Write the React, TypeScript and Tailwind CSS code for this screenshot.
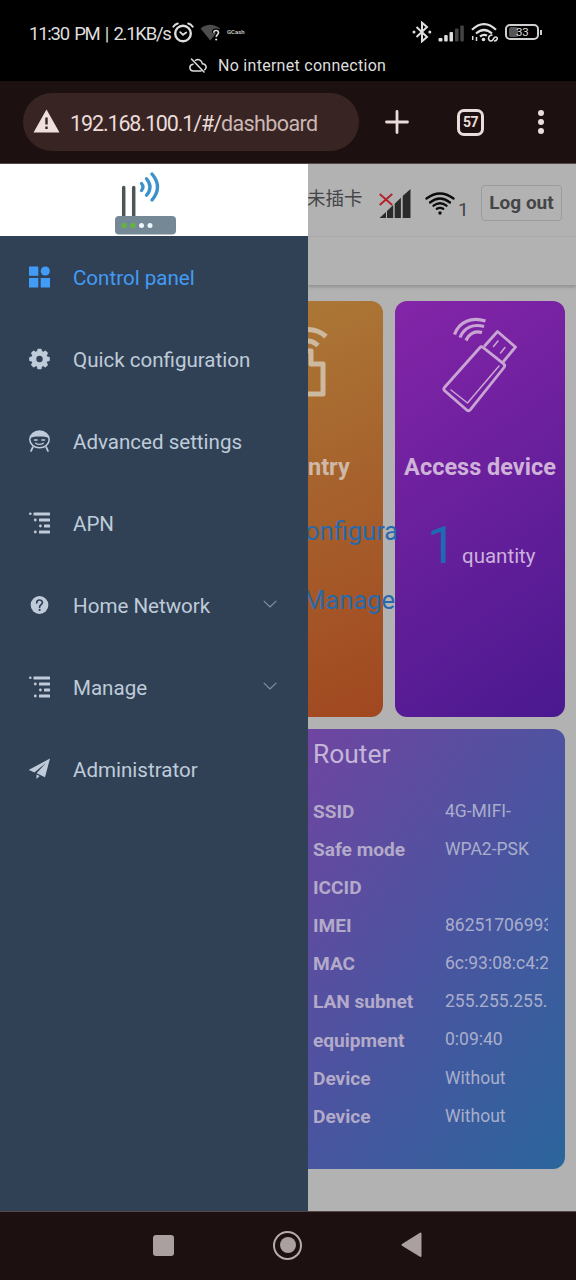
import type { ReactNode } from "react";

interface MenuItem {
  label: string;
  icon: ReactNode;
  active?: boolean;
  expandable?: boolean;
}

interface InfoRow {
  label: string;
  value: string;
}

const PanelIcon = () => (
  <svg width="22" height="22" viewBox="0 0 22 22" fill="currentColor">
    <rect x="0" y="0.5" width="9.3" height="9.3" />
    <circle cx="16.3" cy="5" r="4.6" />
    <rect x="0" y="12" width="9.3" height="9.5" />
    <rect x="11.7" y="12" width="9.3" height="9.5" />
  </svg>
);

const GearIcon = () => (
  <svg width="22" height="22" viewBox="0.5 0 22 22">
    <g fill="currentColor">
      <circle cx="11" cy="11" r="8.3" />
      {[0, 45, 90, 135].map((deg) => (
        <rect
          key={deg}
          x="8.7"
          y="0.7"
          width="4.6"
          height="20.6"
          rx="1.2"
          transform={`rotate(${deg} 11 11)`}
        />
      ))}
    </g>
    <circle cx="11" cy="11" r="3.2" fill="#304156" />
  </svg>
);

const FaceIcon = () => (
  <svg
    width="22"
    height="22"
    viewBox="0.5 0 22 22"
    fill="none"
    stroke="currentColor"
    strokeLinecap="round"
  >
    <ellipse cx="11" cy="9.4" rx="9.7" ry="8.4" strokeWidth="1.5" />
    <path
      d="M2 8C3 3 7 .9 11 .9s8 2.1 9 7.1c-2.500-1-4.500-1.400-9-1.400S4.500 7 2 8z"
      fill="currentColor"
      stroke="none"
    />
    <path d="M6 10h2.600M13.400 10H16" strokeWidth="1.4" />
    <path d="M7.200 13.200c2 1.500 5.600 1.500 7.600 0" strokeWidth="1.3" />
    <path d="M4.300 17.200L2.600 20.900M17.700 17.200l1.700 3.700" strokeWidth="1.8" />
  </svg>
);

const TreeIcon = () => (
  <svg width="22" height="22" viewBox="0.5 0 22 22" fill="currentColor">
    <circle cx="1.8" cy="1.8" r="1.3" />
    <rect x="5" y="0.4" width="16.5" height="3" rx="0.5" />
    <circle cx="6.8" cy="8" r="1.4" />
    <rect x="10.5" y="6.5" width="11" height="3" rx="0.5" />
    <circle cx="11.9" cy="14" r="1.4" />
    <rect x="15.5" y="12.5" width="6" height="3" rx="0.5" />
    <circle cx="6.8" cy="20" r="1.4" />
    <rect x="10.5" y="18.5" width="11" height="3" rx="0.5" />
  </svg>
);

const QuestionIcon = () => (
  <svg width="22" height="22" viewBox="0.5 0 22 22" fill="none">
    <circle cx="11" cy="11" r="8.9" fill="currentColor" />
    <path
      d="M8.200 8.800c0-3.700 5.700-3.700 5.700-.2 0 2.200-2.800 2-2.800 4.600"
      stroke="#304156"
      strokeWidth="1.7"
      strokeLinecap="round"
    />
    <circle cx="11.1" cy="15.9" r="1.1" fill="#304156" />
  </svg>
);

const PlaneIcon = () => (
  <svg width="22" height="22" viewBox="0.5 0 22 22" fill="currentColor">
    <path d="M21.500.5L.3 11.900l5.600 2.700L17.600 4.700 8.100 15.300l8.400 4L21.500.5z" />
    <path d="M8 16.600v4.300l3.100-2.900L8 16.600z" />
  </svg>
);

const ChevronIcon = () => (
  <svg className="-mt-0.5" width="14" height="8" viewBox="0 0 14 8" fill="none">
    <path d="M.7.800L7 7 13.300.8" stroke="#8393a7" strokeWidth="1.1" />
  </svg>
);

const RouterLogo = () => (
  <svg width="62" height="64" viewBox="0.5 0.5 62 64">
    <g stroke="#4e5557" strokeWidth="3.5" strokeLinecap="round">
      <path d="M9.200 16v30M19.200 16v30" />
    </g>
    <rect x="0.5" y="44.5" width="61" height="18.5" rx="4" fill="#758896" />
    <circle cx="9.7" cy="54" r="2.8" fill="#62b346" />
    <circle cx="18.5" cy="54" r="2.8" fill="#62b346" />
    <circle cx="27" cy="54" r="2.5" fill="#edf6ff" />
    <circle cx="35.5" cy="54" r="2.5" fill="#edf6ff" />
    <g fill="none" stroke="#3c91ca" strokeWidth="3.3" strokeLinecap="round">
      <path d="M27 12q3 3.500 0 7" />
      <path d="M32 7.200q7 8.300 0 16.600" />
      <path d="M37.500 2.500q11 13 0 26" />
    </g>
  </svg>
);

const UsbIcon = () => (
  <svg
    className="overflow-visible"
    width="76"
    height="96"
    viewBox="0 0 76 96"
    fill="none"
    stroke="#c9a5d4"
    strokeWidth="2.8"
    strokeLinejoin="round"
    strokeLinecap="round"
  >
    <path d="M37 30.500L1.400 70.500q-1.300 1.700.3 3.200l22.300 19.500q1.700 1.300 3.200-.3L61 50.500q1.500-2-.3-3.600L40 30.400q-1.700-1.400-3 .1z" />
    <path d="M42 28.500L54.500 14.500 72.500 30 60.500 44.500" />
    <path d="M8 73L24.500 86 56 49" strokeWidth="1.5" />
    <path d="M55 24l-4.500 5.500M62 30.500L57.500 36" strokeWidth="1.6" />
    <g strokeWidth="3.2" strokeLinecap="butt">
      <path d="M11.500 17.500C16 4.500 29-.5 42.500 4" />
      <path d="M17 20.500C21 10.500 30 6.500 41 9.500" />
      <path d="M23 23.500C26 16.500 32 13.500 39 15.500" />
    </g>
  </svg>
);

const ModemIcon = () => (
  <svg
    width="22"
    height="72"
    viewBox="0 0 22 72"
    fill="none"
    stroke="#cdb8a0"
    strokeWidth="5"
  >
    <path d="M0 3.500q10 0 18 7" />
    <path d="M0 15q5 0 10 4.500" />
    <path d="M0 25h3V38h12v30H0" strokeLinejoin="round" />
  </svg>
);

const NoSignalIcon = () => (
  <svg width="32" height="30" viewBox="0 0 32 30">
    <path
      d="M.5 29l6.500-6V29zM8 29v-7l6.200-6V29zM15.700 29V14.800l6.200-6V29zM23.700 29V7L31.500 0v29z"
      fill="#2b2b2b"
    />
    <path
      d="M.7 5l12.500 11M13.200 5L.7 16"
      stroke="#b3202c"
      strokeWidth="1.9"
    />
  </svg>
);

const WifiIcon = () => (
  <svg
    width="30"
    height="24"
    viewBox="0 0 30 24"
    fill="none"
    stroke="#0c0c0c"
    strokeWidth="2.3"
    strokeLinecap="round"
  >
    <path d="M1.500 6.500Q15-3.500 28.500 6.500" />
    <path d="M5 10.500Q15 2.500 25 10.500" />
    <path d="M8.500 13.700Q15 8.700 21.500 13.700" />
    <path d="M11.800 16.800Q15 14.800 18.200 16.800" />
    <circle cx="15" cy="21" r="1.7" fill="#0c0c0c" stroke="none" />
  </svg>
);

const menu: MenuItem[] = [
  { label: "Control panel", icon: <PanelIcon />, active: true },
  { label: "Quick configuration", icon: <GearIcon /> },
  { label: "Advanced settings", icon: <FaceIcon /> },
  { label: "APN", icon: <TreeIcon /> },
  { label: "Home Network", icon: <QuestionIcon />, expandable: true },
  { label: "Manage", icon: <TreeIcon />, expandable: true },
  { label: "Administrator", icon: <PlaneIcon /> },
];

const routerInfo: InfoRow[] = [
  { label: "SSID", value: "4G-MIFI-" },
  { label: "Safe mode", value: "WPA2-PSK" },
  { label: "ICCID", value: "" },
  { label: "IMEI", value: "862517069933" },
  { label: "MAC", value: "6c:93:08:c4:2" },
  { label: "LAN subnet", value: "255.255.255." },
  { label: "equipment", value: "0:09:40" },
  { label: "Device", value: "Without" },
  { label: "Device", value: "Without" },
];

function StatusBar() {
  return (
    <div className="h-[81px] shrink-0 bg-black text-[#dedede]">
      <div className="flex h-[50px] items-center pt-[17px] pl-[29px]">
        <span className="w-[143px] text-[18.5px] leading-[22px] tracking-[-1.25px] [word-spacing:2px] whitespace-nowrap">
          11:30 PM | 2.1KB/s
        </span>
        <svg
          className="-mt-[3px]"
          width="22"
          height="21"
          viewBox="0 0 22 21"
          fill="none"
          stroke="#dedede"
          strokeLinecap="round"
        >
          <circle cx="11" cy="11.5" r="7.8" strokeWidth="2.4" />
          <path d="M8.200 10.200L11 12.800l3.200-2.300" strokeWidth="1.8" />
          <path d="M1.300 4.800Q3 2.300 5.800 1.500M20.700 4.800Q19 2.300 16.200 1.500" strokeWidth="1.9" />
        </svg>
        <svg className="-mt-0.5 ml-1.5" width="22" height="18" viewBox="0 0 22 18">
          <path d="M.5 4.500Q10-3 20 4.500L10.300 16.500z" fill="#4d4d4d" />
          <path
            d="M13.800 8.800c0-3 4.700-3 4.700 0 0 1.900-2.300 1.800-2.300 4.200"
            fill="none"
            stroke="#000"
            strokeWidth="4"
          />
          <path
            d="M13.800 8.800c0-3 4.700-3 4.700 0 0 1.900-2.300 1.800-2.300 4.200"
            fill="none"
            stroke="#dedede"
            strokeWidth="1.6"
          />
          <circle cx="16.2" cy="15.5" r="1.1" fill="#dedede" />
        </svg>
        <span className="-mt-[3px] ml-[5px] w-[22px] text-[6px] leading-2 font-medium">
          GCash
        </span>
        <svg
          className="-mt-[3px] ml-[163px]"
          width="20"
          height="22"
          viewBox="0 0 20 22"
          fill="none"
          stroke="#dedede"
          strokeWidth="2"
        >
          <path d="M4.500 6l10.500 10-5 4.300V1.700L15 6 4.500 16" />
          <circle cx="2" cy="11" r="1.5" fill="#dedede" stroke="none" />
          <circle cx="17.8" cy="11" r="1.5" fill="#dedede" stroke="none" />
        </svg>
        <svg className="-mt-px ml-1.5" width="26" height="17" viewBox="0 0 26 17">
          <g fill="#dedede">
            <rect x="0.5" y="13" width="4" height="3.5" rx="1" />
            <rect x="6.2" y="10" width="3.5" height="6.5" rx="1" />
            <rect x="11.5" y="7" width="3.5" height="9.5" rx="1" />
          </g>
          <g fill="#444">
            <rect x="17" y="3.5" width="3.5" height="13" rx="1" />
            <rect x="22.3" y="0.5" width="3.5" height="16" rx="1" />
          </g>
        </svg>
        <svg
          className="-mt-0.5 ml-[7px]"
          width="27"
          height="19"
          viewBox="0 0 27 19"
          fill="none"
          stroke="#dedede"
          strokeWidth="2.2"
        >
          <path d="M1 6.800Q13-4.500 25 6.800M5 10.500Q13 3.500 21 10.500M9 13.500q4-3 7-.8" />
          <circle cx="12.5" cy="16.5" r="1.8" fill="#dedede" stroke="none" />
          <path d="M1.700 13v4M5.500 18v-4" strokeWidth="1.5" />
          <path d="M21.500 12c-5 0-5 6-1.500 6 3 0 2-4 4.500-4 3 0 2 4-1.500 4" strokeWidth="1.6" />
        </svg>
        <div className="-mt-[3px] ml-[7px] flex h-4 w-[34px] items-center rounded-[5px] border-2 border-[#d0d0d0] p-0.5">
          <div className="-mr-0.5 h-2.5 w-[9px] rounded-xs bg-[#555]" />
          <span className="text-[11.5px] leading-3 tracking-[-0.2px]">33</span>
        </div>
        <div className="-mt-[3px] ml-px h-[5px] w-0.5 bg-[#d0d0d0]" />
      </div>
      <div className="flex h-[31px] items-center pl-[189px]">
        <svg
          width="18"
          height="15"
          viewBox="0 0 18 15"
          fill="none"
          stroke="#dedede"
          strokeWidth="1.5"
          strokeLinecap="round"
        >
          <path d="M6.500 2.300c3-1.800 6.500.2 6.800 3.400 4 .1 4.800 4.300 2.500 6M12 13H4.500C-.2 13-.2 6.800 4 6.300M2.500 1l12.500 13" />
        </svg>
        <span className="ml-[11px] text-[16px] leading-5 tracking-[0.28px] whitespace-nowrap">
          No internet connection
        </span>
      </div>
    </div>
  );
}

function BrowserBar() {
  return (
    <div className="flex h-[83px] shrink-0 items-center border-b border-[#55484a] bg-[#1c1010] pl-[23px] text-[#eadcda]">
      <div className="flex h-[58px] w-[336px] items-center rounded-full bg-[#382523] pl-2.5">
        <svg className="-mt-0.5" width="27" height="24" viewBox="0 0 27 24">
          <path d="M13.500.5L26.500 23.500H.5z" fill="#f0e0dd" />
          <path d="M13.500 8.500v7M13.500 17.500v2.500" stroke="#382523" strokeWidth="2.4" />
        </svg>
        <p className="mt-[3px] ml-2.5 text-[21.5px] leading-7 tracking-[-1.12px] whitespace-nowrap">
          192.168.100.1/#/
          <span className="tracking-[-0.6px] text-[#cdb7b4]">dashboard</span>
        </p>
      </div>
      <svg className="ml-[26px]" width="24" height="24" viewBox="0 0 24 24">
        <path
          d="M12 1.500v21M1.500 12h21"
          stroke="#eadcda"
          strokeWidth="2.8"
          strokeLinecap="round"
        />
      </svg>
      <div className="ml-12 flex h-[27px] w-[27px] items-center justify-center rounded-[7px] border-[3px] border-[#eadcda] text-[14px] font-bold tracking-[-0.5px]">
        57
      </div>
      <div className="ml-[54px] flex flex-col gap-[3px]">
        <span className="h-1.5 w-1.5 rounded-full bg-[#eadcda]" />
        <span className="h-1.5 w-1.5 rounded-full bg-[#eadcda]" />
        <span className="h-1.5 w-1.5 rounded-full bg-[#eadcda]" />
      </div>
    </div>
  );
}

function Sidebar() {
  return (
    <aside className="w-[308px] shrink-0 bg-[#304156]">
      <div className="flex h-[72px] justify-center bg-white pt-2 pr-[17px]">
        <RouterLogo />
      </div>
      <nav>
        {menu.map(({ label, icon, active, expandable }) => (
          <div
            key={label}
            className={`flex h-[82px] items-center pr-[31px] pl-[29px] ${
              active ? "text-[#429bf5]" : "text-[#bfcbd9]"
            }`}
          >
            {icon}
            <span className="mt-0.5 ml-[22px] flex-1 text-[20.55px] leading-6 whitespace-nowrap">
              {label}
            </span>
            {expandable && <ChevronIcon />}
          </div>
        ))}
      </nav>
    </aside>
  );
}

function TopBar() {
  return (
    <header className="h-[122px] border-b border-[#989898] bg-[#b2b2b2] shadow-[0_1px_3px_#8d8d8d]">
      <div className="flex h-[73px] items-start border-b border-[#a9a9a9] text-[#434547]">
        <span className="mt-[21px] -ml-px w-[72px] text-[18.5px] leading-7 whitespace-nowrap">
          未插卡
        </span>
        <div className="mt-[25px]">
          <NoSignalIcon />
        </div>
        <div className="mt-7 ml-3.5">
          <WifiIcon />
        </div>
        <span className="mt-[34px] ml-[3px] w-3 text-[19px] leading-6">1</span>
        <div className="mt-[21px] ml-[11px] flex h-[36px] w-[81px] items-center justify-center rounded-[4px] border border-[#999c9f] text-[19px] font-bold whitespace-nowrap">
          Log out
        </div>
      </div>
    </header>
  );
}

function StatCards() {
  return (
    <div className="flex h-[416px] gap-3">
      <div className="w-[75px] rounded-r-xl bg-linear-[155deg] from-[#ab7736] to-[#a14720]">
        <div className="h-[152px] pt-[25px]">
          <ModemIcon />
        </div>
        <p className="h-7 text-[23.5px] leading-7 font-bold text-[#cfb8a7]">ntry</p>
        <div className="relative z-10 w-[90px] overflow-hidden text-[25.5px] leading-8 whitespace-nowrap text-[#256aae]">
          <p className="mt-[34px] -ml-[3px] h-8">onfigura</p>
          <p className="mt-[37px] -ml-[5px] h-8">Manage</p>
        </div>
      </div>
      <div className="w-[170px] rounded-xl bg-linear-[145deg] from-[#8425a8] to-[#4a198f]">
        <div className="flex h-[152px] pt-4 pl-12">
          <UsbIcon />
        </div>
        <p className="text-center text-[23.5px] leading-7 font-bold whitespace-nowrap text-[#cfb2d8]">
          Access device
        </p>
        <div className="mt-[34px] flex items-baseline pl-8">
          <span className="w-[35px] text-[52px] leading-[62px] text-[#206ab4]">1</span>
          <span className="text-[20.5px] text-[#cbb0dc]">quantity</span>
        </div>
      </div>
    </div>
  );
}

function RouterCard() {
  return (
    <div className="mt-3 h-[440px] w-[257px] rounded-r-xl bg-linear-[125deg] from-[#6f45a1] via-[#4b54a0] to-[#2b659c] pr-[17px] pl-[5px]">
      <h2 className="h-16 pt-[9px] text-[26.4px] leading-8 text-[#c4b6d8]">Router</h2>
      {routerInfo.map(({ label, value }, index) => (
        <div key={index} className="flex h-[38.15px] items-center whitespace-nowrap">
          <span className="w-[132px] text-[19.1px] font-bold text-[#b3aac9]">
            {label}
          </span>
          <span className="mb-[3px] w-[103px] overflow-hidden text-[17.5px] leading-6 text-[#a8aecb]">
            {value}
          </span>
        </div>
      ))}
    </div>
  );
}

function NavigationBar() {
  return (
    <div className="flex h-[69px] shrink-0 items-center border-t border-[#55484a] bg-[#1c1010] pb-0.5 pl-[153px]">
      <div className="h-[21px] w-[21px] rounded-[3px] bg-[#a9a09f]" />
      <div className="ml-[99px] flex h-[29px] w-[29px] items-center justify-center rounded-full border-[2.5px] border-[#b5acab]">
        <div className="h-4 w-4 rounded-full bg-[#a9a09f]" />
      </div>
      <svg className="ml-[99px]" width="21" height="26" viewBox="0 0 21 26">
        <path
          d="M19.500 1.500v22.500L1.500 12.800z"
          fill="#a9a09f"
          stroke="#a9a09f"
          strokeWidth="2"
          strokeLinejoin="round"
        />
      </svg>
    </div>
  );
}

function App() {
  return (
    <div className="flex h-[1280px] w-[576px] flex-col overflow-hidden bg-[#b2b2b2] font-[Roboto,'Noto_Sans_CJK_SC',sans-serif]">
      <StatusBar />
      <BrowserBar />
      <div className="flex h-[1047px] shrink-0">
        <Sidebar />
        <main className="w-[268px] overflow-hidden">
          <TopBar />
          <div className="pt-[15px]">
            <StatCards />
            <RouterCard />
          </div>
        </main>
      </div>
      <NavigationBar />
    </div>
  );
}

export default App;
